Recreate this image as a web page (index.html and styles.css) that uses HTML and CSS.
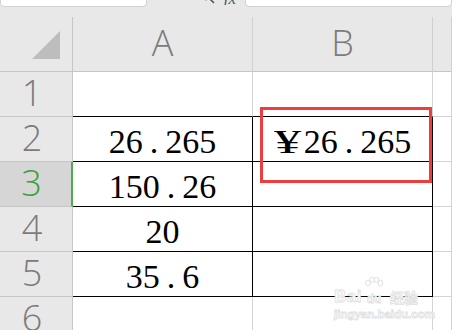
FILE: index.html
```html
<!DOCTYPE html>
<html>
<head>
<meta charset="utf-8">
<link rel="stylesheet" href="styles.css">
</head>
<body>
<div class="toolbar">
  <div class="namebox">B3</div>
  <div class="tools">
    <svg class="mag" width="16" height="16" viewBox="0 0 16 16"><circle cx="6" cy="6" r="4.5" fill="none" stroke="#555" stroke-width="1.4"/><line x1="9.3" y1="9.3" x2="14" y2="14" stroke="#555" stroke-width="1.6"/></svg>
    <span class="fx">fx</span>
  </div>
  <div class="formula"></div>
</div>
<div class="sheet">
  <div class="corner"><svg width="28" height="28" viewBox="0 0 28 28"><polygon points="28,0 28,28 0,28" fill="#bdbdbd"/></svg></div>
  <div class="colhead">A</div>
  <div class="colhead">B</div>
  <div class="colhead"></div>

  <div class="rowhead">1</div>
  <div class="cell kb"></div>
  <div class="cell kb"></div>
  <div class="cell"></div>

  <div class="rowhead">2</div>
  <div class="cell kb kr">26<span class="dot">.</span>265</div>
  <div class="cell kb kr"><span class="yen">¥</span>26<span class="dot">.</span>265</div>
  <div class="cell"></div>

  <div class="rowhead active">3</div>
  <div class="cell kb kr">150<span class="dot">.</span>26</div>
  <div class="cell kb kr"></div>
  <div class="cell"></div>

  <div class="rowhead">4</div>
  <div class="cell kb kr">20</div>
  <div class="cell kb kr"></div>
  <div class="cell"></div>

  <div class="rowhead">5</div>
  <div class="cell kb kr">35<span class="dot">.</span>6</div>
  <div class="cell kb kr"></div>
  <div class="cell"></div>

  <div class="rowhead">6</div>
  <div class="cell"></div>
  <div class="cell"></div>
  <div class="cell"></div>
</div>
<div class="redbox"></div>
<div class="watermark">
  <div class="wm-top"><span class="wm-bai">Bai</span><span class="wm-paw"><svg width="20" height="16" viewBox="0 0 20 16"><ellipse cx="4" cy="6" rx="2.3" ry="3" fill="#fff" stroke="#e0e0e0"/><ellipse cx="8" cy="2.8" rx="2.2" ry="2.6" fill="#fff" stroke="#e0e0e0"/><ellipse cx="12.5" cy="2.8" rx="2.2" ry="2.6" fill="#fff" stroke="#e0e0e0"/><ellipse cx="16.4" cy="6" rx="2.3" ry="3" fill="#fff" stroke="#e0e0e0"/></svg><span class="wm-du">du</span></span><span class="wm-jy">经验</span></div>
  <div class="wm-url">jingyan.baidu.com</div>
</div>
</body>
</html>
```
FILE: styles.css
```css
html, body {
  margin: 0;
  padding: 0;
}
body {
  width: 452px;
  height: 330px;
  overflow: hidden;
  background: #e8e8e8;
  position: relative;
  font-family: "Open Sans", "Noto Sans", "Liberation Sans", sans-serif;
}
.toolbar {
  display: flex;
  height: 17px;
  background: #e8e8e8;
}
.namebox {
  width: 147px;
  height: 28px;
  margin-top: -21px;
  box-sizing: border-box;
  background: #fff;
  border: 1px solid #d2d2d2;
  border-radius: 0 0 4px 4px;
  font-size: 15px;
  line-height: 26px;
  text-align: center;
  color: #333;
}
.tools {
  width: 98px;
  display: flex;
  align-items: flex-end;
  justify-content: flex-end;
  gap: 8px;
  padding-right: 9px;
  box-sizing: border-box;
  height: 5px;
  overflow: hidden;
}
.fx {
  font-family: "Liberation Serif", serif;
  font-style: italic;
  font-size: 17px;
  line-height: 12px;
  color: #555;
}
.formula {
  flex: 1;
  height: 28px;
  margin-top: -21px;
  box-sizing: border-box;
  background: #fff;
  border: 1px solid #d2d2d2;
  border-radius: 0 0 4px 4px;
}
.sheet {
  display: grid;
  grid-template-columns: 73px 180px 180px 1fr;
  grid-template-rows: 55px repeat(5, 45px) 1fr;
  height: 313px;
}
.corner, .colhead, .rowhead {
  background: #e8e8e8;
  box-sizing: border-box;
  border-right: 1px solid #c6c6c6;
  border-bottom: 1px solid #c6c6c6;
  color: #7b7b7b;
  font-size: 36px;
  font-weight: 300;
}
.corner {
  display: flex;
  align-items: flex-end;
  justify-content: flex-end;
  padding: 0 12px 12px 0;
}
.corner svg {
  display: block;
}
.colhead {
  border-right-color: #d0d0d0;
  text-align: center;
  line-height: 52px;
}
.rowhead {
  text-align: center;
  padding-right: 8px;
  line-height: 42px;
}
.rowhead.active {
  background: #d6d6d6;
  color: #3aa03a;
  border-right: 2px solid #4cae4c;
}
.cell {
  background: #fff;
  box-sizing: border-box;
  border-right: 1px solid #d4d4d4;
  border-bottom: 1px solid #d4d4d4;
  font-family: "Liberation Serif", serif;
  font-size: 34px;
  color: #000;
  display: flex;
  align-items: center;
  justify-content: center;
  padding-top: 5px;
}
.cell.kb {
  border-bottom-color: #000;
}
.cell.kr {
  border-right-color: #000;
}
.dot {
  margin: 0 7px;
}
.yen {
  display: inline-block;
  width: 18px;
  transform: scaleX(1.6);
  transform-origin: left center;
  margin-right: 12px;
}
.redbox {
  position: absolute;
  left: 260px;
  top: 107px;
  width: 172px;
  height: 76px;
  box-sizing: border-box;
  border: 3px solid #ee3d3d;
}
.watermark {
  position: absolute;
  left: 334px;
  top: 273px;
  width: 92px;
  font-family: "Liberation Sans", sans-serif;
  font-weight: bold;
  color: #fff;
  -webkit-text-stroke: 0.8px #e0e0e0;
}
.wm-top {
  display: flex;
  align-items: flex-end;
  height: 32px;
}
.wm-bai {
  font-size: 17px;
  line-height: 17px;
  letter-spacing: 0.5px;
}
.wm-paw {
  display: flex;
  flex-direction: column;
  align-items: center;
  width: 22px;
  margin-left: 1px;
}
.wm-paw svg {
  display: block;
}
.wm-du {
  font-size: 12px;
  line-height: 12px;
}
.wm-jy {
  font-family: "Noto Sans CJK SC", sans-serif;
  font-size: 14px;
  line-height: 16px;
  margin-left: 5px;
}
.wm-url {
  font-size: 11.5px;
  line-height: 14px;
  margin-top: 2px;
}
```
